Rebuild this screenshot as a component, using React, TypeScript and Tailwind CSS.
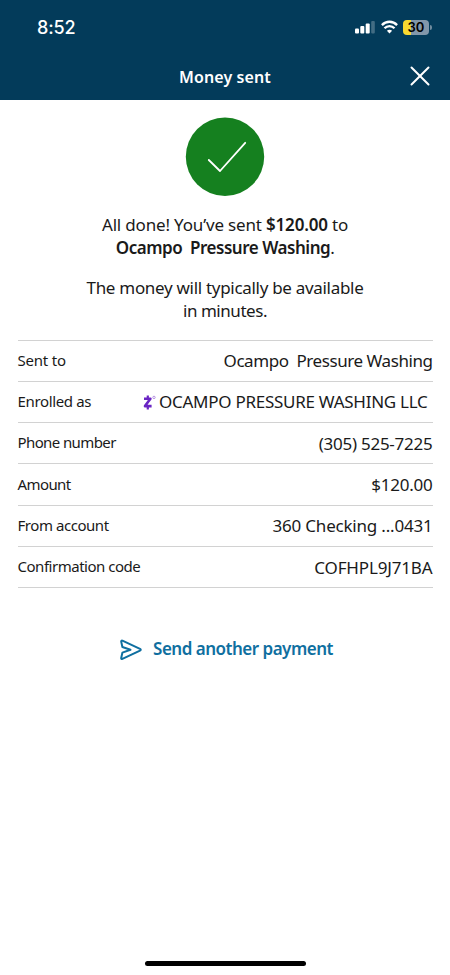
import React from "react";
import { X } from "lucide-react";

const rows = [
    { label: "Sent to", value: "Ocampo \u00a0Pressure Washing", labelStyle: "tracking-[-0.2px]", valueStyle: "tracking-[-0.44px]" },
    { label: "Enrolled as", value: "OCAMPO PRESSURE WASHING LLC", zelle: true, labelStyle: "tracking-[-0.35px]", valueStyle: "tracking-[-0.27px]" },
    { label: "Phone number", value: "(305) 525-7225", labelStyle: "tracking-[-0.6px]", valueStyle: "tracking-[-0.25px]" },
    { label: "Amount", value: "$120.00", labelStyle: "tracking-[-0.6px]", valueStyle: "tracking-[-0.25px]" },
    { label: "From account", value: "360 Checking ...0431", labelStyle: "tracking-[-0.45px]", valueStyle: "tracking-[-0.2px]" },
    { label: "Confirmation code", value: "COFHPL9J71BA", labelStyle: "tracking-[-0.48px]", valueStyle: "tracking-[-0.15px]" },
];

const StatusBar = () => (
    <div className="flex h-[54px] items-center justify-between pl-[37px] pr-[18px]">
        <span className="pt-px font-['Inter',sans-serif] text-[18px] font-medium leading-6 tracking-[-0.1px]">8:52</span>
        <div className="flex items-center">
            <svg width="20" height="14" viewBox="0 0 20 14" fill="#fff">
                <rect x="0" y="8.5" width="4" height="5" rx="1" />
                <rect x="5.3" y="6" width="4" height="7.5" rx="1" />
                <rect x="10.7" y="3.5" width="4" height="10" rx="1" />
                <rect x="16.2" y="1" width="3.6" height="12.5" rx="1" opacity="0.25" />
            </svg>
            <svg className="ml-[6px]" width="17" height="14" viewBox="0 0 17 14" fill="none" stroke="#fff" strokeWidth="2.3">
                <path d="M0.9 5.1C5.2 0.6 11.8 0.6 16.1 5.1" />
                <path d="M3.5 8.3C6.3 5.3 10.7 5.3 13.5 8.3" />
                <path d="M8.5 13.4L5.9 10.8C7.3 9.3 9.7 9.3 11.1 10.8Z" fill="#fff" stroke="none" />
            </svg>
            <div className="ml-[5px] flex h-[15px] w-[26px] items-center justify-center rounded-[4px] bg-[linear-gradient(90deg,#fad930_30%,#8297aa_30%)] font-['Inter',sans-serif] text-[13px] font-semibold leading-none text-black">
                30
            </div>
            <div className="ml-px h-[5px] w-[2px] rounded-r-full bg-[#6f8b9e]" />
        </div>
    </div>
);

const ZelleMark = () => (
    <svg className="mr-[3px]" width="14" height="17" viewBox="0 0 14 17" fill="none" stroke="#6a25c4">
        <path d="M2 4.7H8.4L3 12.1H9.6" strokeWidth="2.6" strokeLinejoin="round" />
        <path d="M5.8 1.4V4.5M5.8 12.5V15.4" strokeWidth="2.2" />
        <circle cx="12" cy="3.4" r="1.2" strokeWidth="0.9" opacity="0.5" />
    </svg>
);

const App = () => {
    return (
        <div className="flex h-[975px] w-[450px] flex-col bg-white font-['Noto_Sans',sans-serif] text-[#1a1a1a]">
            <header className="h-[100px] bg-[#033b5a] text-white">
                <StatusBar />
                <div className="grid h-[46px] grid-cols-[1fr_auto_1fr] items-center px-[13px]">
                    <span />
                    <h1 className="text-[16px] font-semibold leading-6 tracking-[0.1px]">Money sent</h1>
                    <button className="justify-self-end pb-[2px]" aria-label="Close">
                        <X size={34} strokeWidth={1.4} />
                    </button>
                </div>
            </header>

            <main className="flex flex-col px-[17.5px]">
                <svg className="mt-[17px] self-center" width="80" height="80" viewBox="0 0 80 80" fill="none">
                    <circle cx="40" cy="39.7" r="39.2" fill="#15801f" />
                    <path d="M23.8 43L35 54L60.2 25.8" stroke="#fff" strokeWidth="1.8" strokeLinecap="round" strokeLinejoin="round" />
                </svg>

                <div className="mt-[17px] text-center text-[17px] leading-[22.5px]">
                    <p className="tracking-[-0.17px]">
                        All done! You’ve sent <b className="font-semibold tracking-[-0.2px]">$120.00</b> to
                    </p>
                    <p className="tracking-[-0.48px]">
                        <b className="font-semibold">Ocampo &nbsp;Pressure Washing</b>.
                    </p>
                    <p className="mt-[18px] tracking-[-0.3px]">The money will typically be available</p>
                    <p className="tracking-[-0.45px]">in minutes.</p>
                </div>

                <dl className="mt-[17.5px] border-t border-[#d2d2d2]">
                    {rows.map((row) => (
                        <div key={row.label} className="flex h-[41.3px] items-center justify-between border-b border-[#d2d2d2]">
                            <dt className={`pb-[2px] text-[15px] leading-5 ${row.labelStyle}`}>{row.label}</dt>
                            <dd className={`flex items-center pt-px text-[17px] leading-5 ${row.valueStyle} ${row.zelle ? "pr-[5px]" : ""}`}>
                                {row.zelle && <ZelleMark />}
                                {row.value}
                            </dd>
                        </div>
                    ))}
                </dl>

                <button className="mt-[47.5px] flex items-center gap-[10px] self-center pl-[2px] text-[#0f6fa0]">
                    <svg className="mt-[2px]" width="24" height="24" viewBox="0 0 24 24" fill="none" stroke="currentColor" strokeWidth="2" strokeLinejoin="round" strokeLinecap="round">
                        <path d="M2.2 3.6C2.1 2.7 2.6 2.4 3.4 2.7L21 10.8C22 11.4 22 12.2 21 12.7L3.4 20.9C2.6 21.2 2.1 20.8 2.2 20L3.4 14.6L11.5 11.8L3.4 9Z" />
                    </svg>
                    <span className="text-[17px] font-semibold leading-6 tracking-[-0.5px]">Send another payment</span>
                </button>
            </main>

            <div className="mb-[9px] mt-auto h-[5px] w-[161px] self-center rounded-full bg-black" />
        </div>
    );
};

export default App;
